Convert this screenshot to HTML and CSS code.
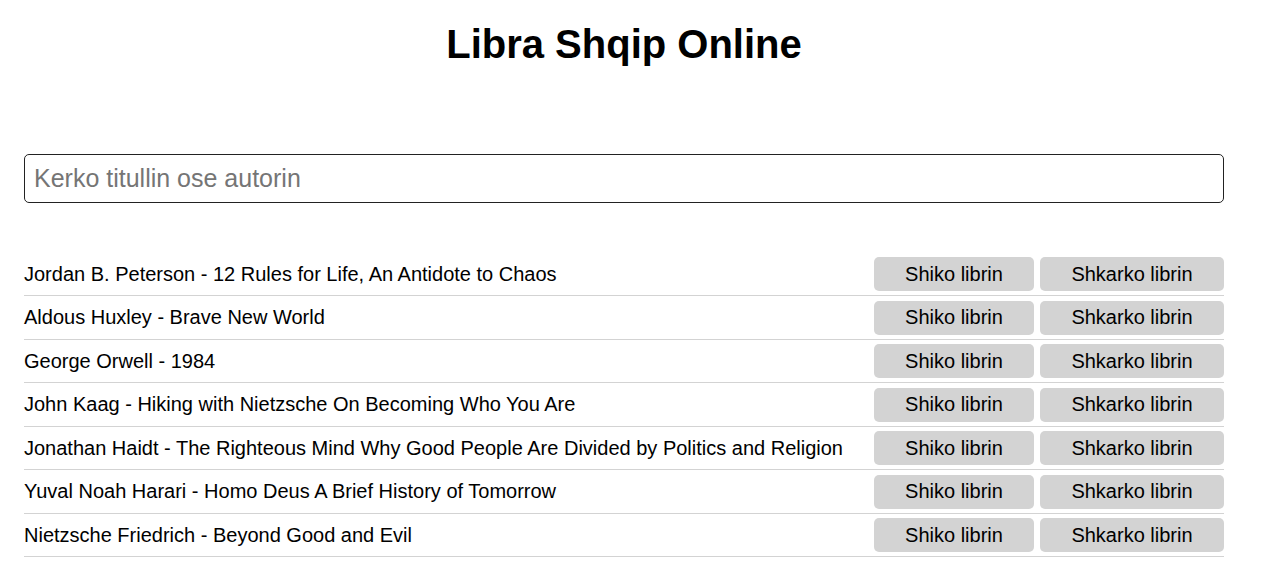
FILE: index.html
```html
<!DOCTYPE html>
<html lang="sq">
<head>
<meta charset="utf-8">
<title>Libra Shqip Online</title>
<link rel="stylesheet" href="styles.css">
</head>
<body>
<div class="page">
  <h1 class="title">Libra Shqip Online</h1>
  <input class="search" type="text" placeholder="Kerko titullin ose autorin">
  <ul class="books">
    <li class="book"><span class="book-name">Jordan B. Peterson - 12 Rules for Life, An Antidote to Chaos</span><div class="actions"><button class="btn btn-view">Shiko librin</button><button class="btn btn-dl">Shkarko librin</button></div></li>
    <li class="book"><span class="book-name">Aldous Huxley - Brave New World</span><div class="actions"><button class="btn btn-view">Shiko librin</button><button class="btn btn-dl">Shkarko librin</button></div></li>
    <li class="book"><span class="book-name">George Orwell - 1984</span><div class="actions"><button class="btn btn-view">Shiko librin</button><button class="btn btn-dl">Shkarko librin</button></div></li>
    <li class="book"><span class="book-name">John Kaag - Hiking with Nietzsche On Becoming Who You Are</span><div class="actions"><button class="btn btn-view">Shiko librin</button><button class="btn btn-dl">Shkarko librin</button></div></li>
    <li class="book"><span class="book-name">Jonathan Haidt - The Righteous Mind Why Good People Are Divided by Politics and Religion</span><div class="actions"><button class="btn btn-view">Shiko librin</button><button class="btn btn-dl">Shkarko librin</button></div></li>
    <li class="book"><span class="book-name">Yuval Noah Harari - Homo Deus A Brief History of Tomorrow</span><div class="actions"><button class="btn btn-view">Shiko librin</button><button class="btn btn-dl">Shkarko librin</button></div></li>
    <li class="book"><span class="book-name">Nietzsche Friedrich - Beyond Good and Evil</span><div class="actions"><button class="btn btn-view">Shiko librin</button><button class="btn btn-dl">Shkarko librin</button></div></li>
  </ul>
</div>
</body>
</html>
```
FILE: styles.css
```css
html, body {
  margin: 0;
  padding: 0;
  background: #fff;
}
body {
  font-family: "Liberation Sans", Arial, sans-serif;
  color: #000;
}
.page {
  width: 1200px;
  margin: 0 0 0 24px;
  padding-top: 24px;
}
.title {
  margin: 0;
  font-size: 40px;
  font-weight: bold;
  text-align: center;
  line-height: 41px;
}
.search {
  display: block;
  box-sizing: border-box;
  width: 1200px;
  height: 49px;
  margin: 89px 0 0 0;
  padding: 0 9px;
  border: 1px solid #222;
  border-radius: 5px;
  font-family: "Liberation Sans", Arial, sans-serif;
  font-size: 25px;
  color: #000;
  outline: none;
}
.search::placeholder {
  color: #757575;
}
.books {
  list-style: none;
  margin: 54px 0 0 0;
  padding: 0;
}
.book {
  display: flex;
  align-items: center;
  justify-content: space-between;
  padding: 0 0 4px 0;
  margin-bottom: 4.5px;
  border-bottom: 1px solid #d3d3d3;
}
.book-name {
  font-size: 20px;
}
.actions {
  display: flex;
  gap: 6px;
}
.btn {
  box-sizing: border-box;
  height: 34px;
  border: none;
  border-radius: 5px;
  background: #d3d3d3;
  color: #000;
  font-family: "Liberation Sans", Arial, sans-serif;
  font-size: 20px;
  padding: 0;
}
.btn-view {
  width: 160px;
}
.btn-dl {
  width: 184px;
}
```
